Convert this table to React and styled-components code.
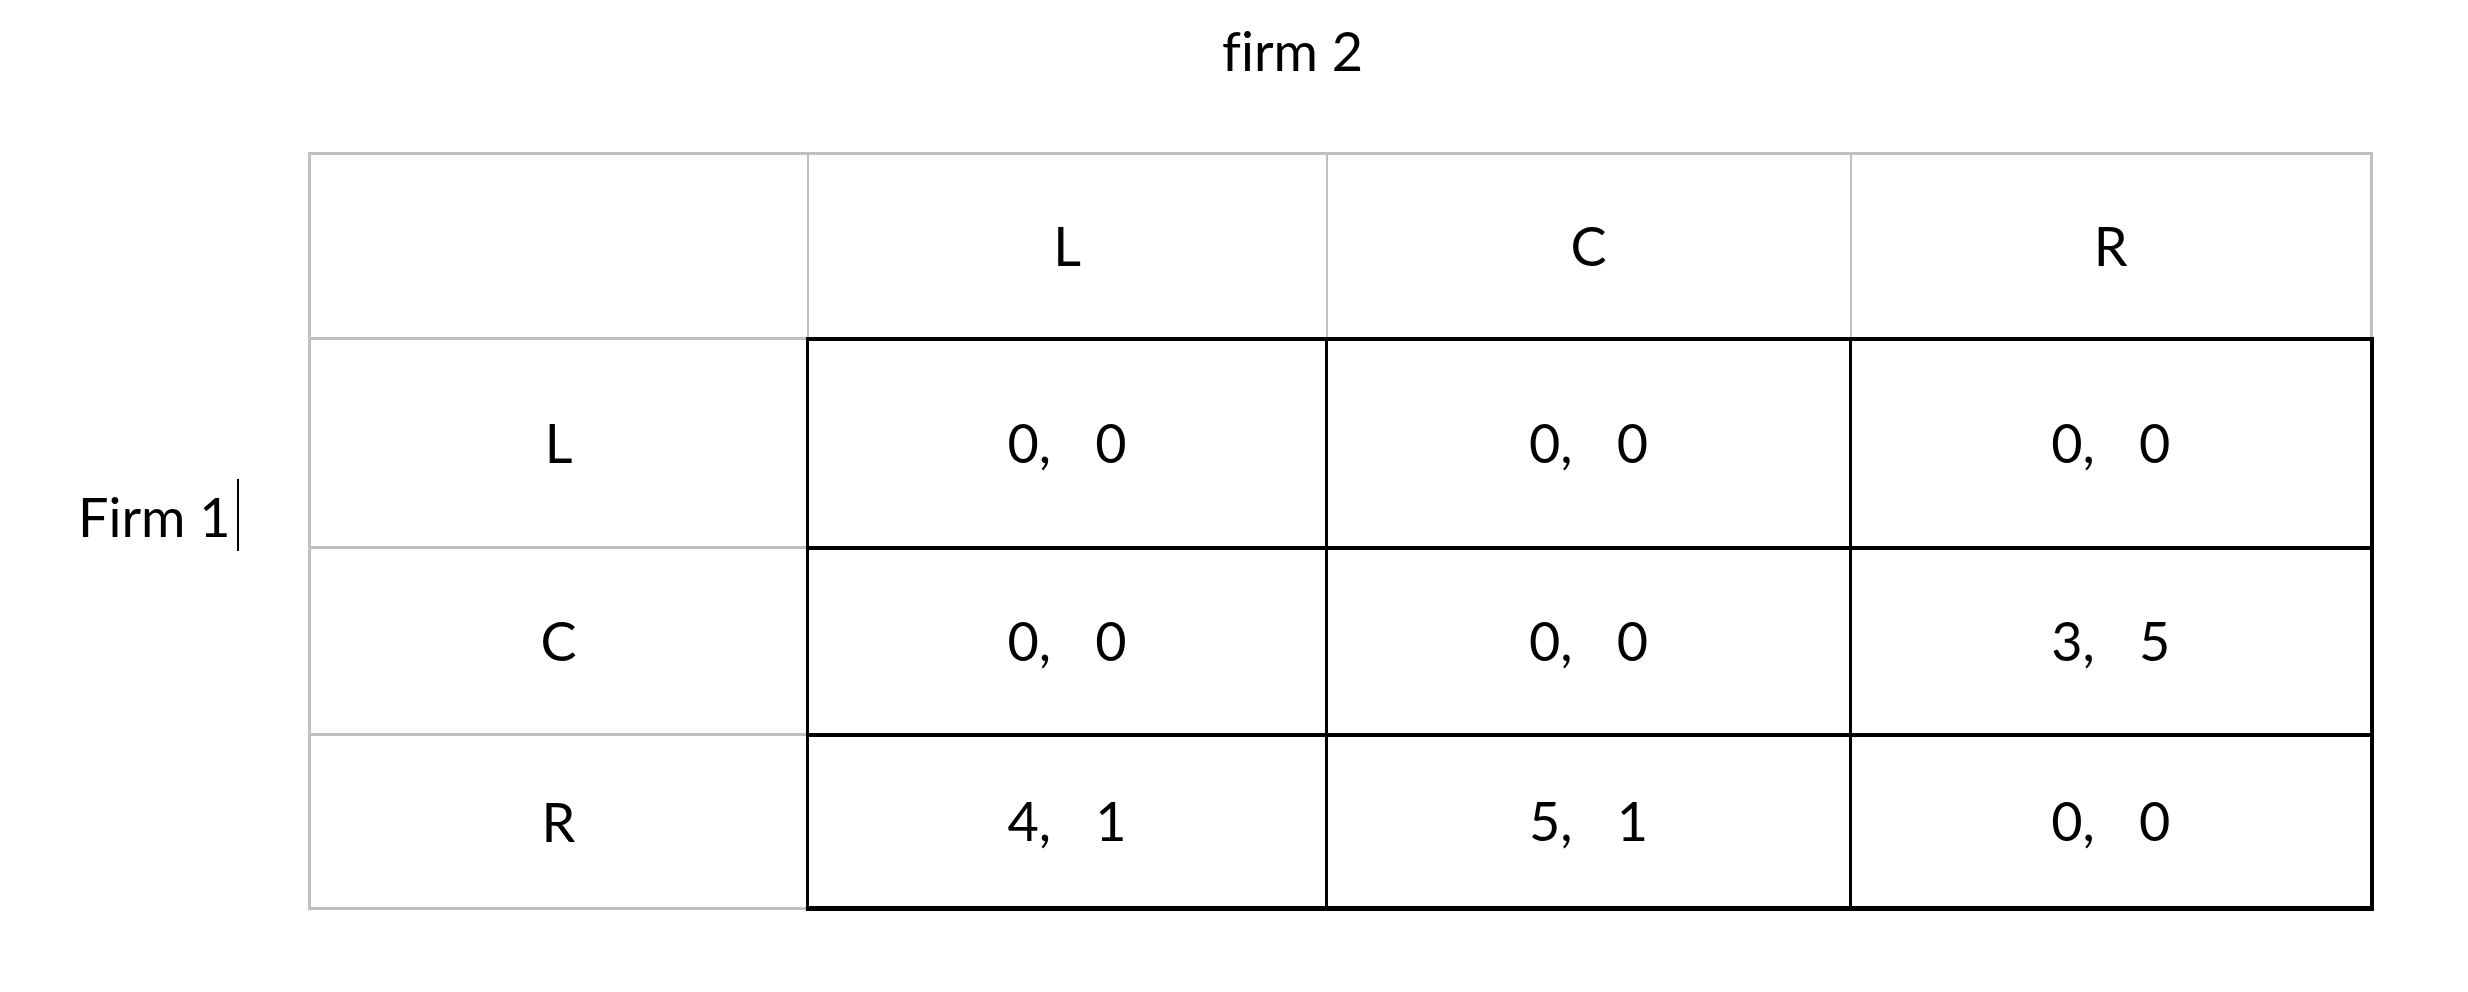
import React from 'react'
import styled, { createGlobalStyle } from 'styled-components'

const GlobalStyle = createGlobalStyle`
  html, body {
    margin: 0;
    padding: 0;
    background: #ffffff;
  }

  body {
    font-family: Lato, 'Open Sans', 'Liberation Sans', sans-serif;
    font-variant-ligatures: none;
    color: #000000;
  }
`

const Page = styled.main`
  width: 2468px;
  height: 992px;
  background: #ffffff;
`

const Title = styled.h1`
  margin: 0;
  padding: 19px 0 0 1222px;
  font-size: 54px;
  font-weight: 400;
  line-height: 64px;
  height: 64px;
`

const Body = styled.section`
  display: flex;
  align-items: flex-start;
  margin-top: 69px;
`

const Side = styled.div`
  width: 308px;
  flex: none;
  padding: 327px 0 0 78px;
  box-sizing: border-box;
  font-size: 54px;
  line-height: 64px;
  white-space: nowrap;
`

const Caret = styled.span`
  display: inline-block;
  width: 2px;
  height: 72px;
  margin-left: 6px;
  background: #000000;
  vertical-align: -14px;
`

const Matrix = styled.table`
  border-collapse: collapse;
  table-layout: fixed;
  border: 3px solid #c0c0c0;
  font-size: 54px;
  line-height: 64px;

  tr:last-child td.payoff {
    border-bottom-width: 5px;
  }

  td.payoff:last-child {
    border-right-width: 4px;
  }
`

const Row = styled.tr`
  height: ${(p) => p.$h}px;
`

const Cell = styled.td`
  padding: 0;
  text-align: center;
  vertical-align: middle;
  border-style: solid;
  border-color: ${(p) => (p.$payoff ? '#000000' : '#c0c0c0')};
  border-width: ${(p) => (p.$payoff ? '4px 3px' : '3px 2px')};
`

const Pair = styled.span`
  display: inline-flex;
  gap: 44px;
`

const Payoff = ({ a, b }) => (
  <Cell $payoff className="payoff">
    <Pair>
      <span>{a},</span>
      <span>{b}</span>
    </Pair>
  </Cell>
)

const strategies = ['L', 'C', 'R']
const payoffs = [
  [[0, 0], [0, 0], [0, 0]],
  [[0, 0], [0, 0], [3, 5]],
  [[4, 1], [5, 1], [0, 0]],
]
const rowHeights = [209, 187, 174]

export default function App() {
  return (
    <Page>
      <GlobalStyle />
      <Title>firm 2</Title>
      <Body>
        <Side>
          Firm 1<Caret />
        </Side>
        <Matrix>
          <colgroup>
            <col style={{ width: 498 }} />
            <col style={{ width: 519 }} />
            <col style={{ width: 524 }} />
            <col style={{ width: 521 }} />
          </colgroup>
          <tbody>
            <Row $h={185}>
              <Cell />
              {strategies.map((s) => (
                <Cell key={s}>{s}</Cell>
              ))}
            </Row>
            {strategies.map((s, i) => (
              <Row key={s} $h={rowHeights[i]}>
                <Cell>{s}</Cell>
                {payoffs[i].map(([a, b], j) => (
                  <Payoff key={j} a={a} b={b} />
                ))}
              </Row>
            ))}
          </tbody>
        </Matrix>
      </Body>
    </Page>
  )
}
